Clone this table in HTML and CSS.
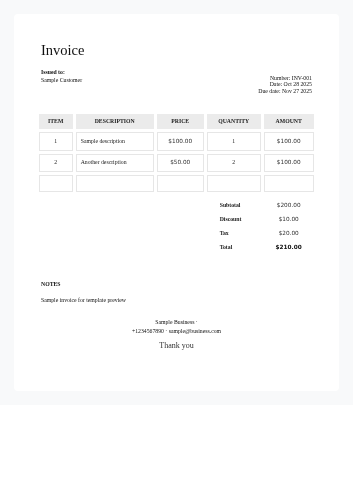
FILE: index.html
```html
<!DOCTYPE html>
<html lang="en">
<head>
<meta charset="utf-8">
<title>Invoice</title>
<link rel="stylesheet" href="styles.css">
</head>
<body>
<div class="page">
  <div class="card">
    <h1 class="title">Invoice</h1>
    <div class="meta">
      <div class="issued">
        <div class="strong">Issued to:</div>
        <div>Sample Customer</div>
      </div>
      <div class="info">
        <div>Number: INV-001</div>
        <div>Date: Oct 28 2025</div>
        <div>Due date: Nov 27 2025</div>
      </div>
    </div>
    <table class="items">
      <colgroup>
        <col class="c-item"><col class="c-desc"><col class="c-price"><col class="c-qty"><col class="c-amt">
      </colgroup>
      <thead>
        <tr><th>ITEM</th><th>DESCRIPTION</th><th>PRICE</th><th>QUANTITY</th><th>AMOUNT</th></tr>
      </thead>
      <tbody>
        <tr><td>1</td><td class="desc">Sample description</td><td class="money">$100.00</td><td>1</td><td class="money">$100.00</td></tr>
        <tr><td>2</td><td class="desc">Another description</td><td class="money">$50.00</td><td>2</td><td class="money">$100.00</td></tr>
        <tr class="empty"><td></td><td></td><td></td><td></td><td></td></tr>
      </tbody>
    </table>
    <div class="totals">
      <div class="t-label">Subtotal</div><div class="t-value">$200.00</div>
      <div class="t-label">Discount</div><div class="t-value">$10.00</div>
      <div class="t-label">Tax</div><div class="t-value">$20.00</div>
      <div class="t-label">Total</div><div class="t-value grand">$210.00</div>
    </div>
    <div class="notes">
      <div class="notes-title">NOTES</div>
      <div class="notes-text">Sample invoice for template preview</div>
    </div>
    <div class="footer">
      <div class="footer-line">Sample Business ·</div>
      <div class="footer-line">+1234567890 · sample@business.com</div>
      <div class="thanks">Thank you</div>
    </div>
  </div>
</div>
</body>
</html>
```
FILE: styles.css
```css
html, body {
  margin: 0;
  background: #ffffff;
}
body {
  font-family: "Liberation Serif", "Times New Roman", serif;
  color: #111;
}
.page {
  background: #f8f9fa;
  padding: 14px;
}
.card {
  background: #ffffff;
  border-radius: 4px;
  padding: 28px 27px 40px;
  will-change: transform;
}
.title {
  margin: 0;
  font-size: 14.5px;
  line-height: 17px;
  font-weight: normal;
  color: #111;
}
.meta {
  display: flex;
  justify-content: space-between;
  align-items: flex-start;
  margin-top: 8.5px;
  font-size: 5.75px;
}
.issued {
  line-height: 8px;
}
.strong {
  font-weight: bold;
}
.info {
  margin-top: 7px;
  line-height: 6.5px;
  text-align: right;
}
.items {
  border-collapse: separate;
  border-spacing: 3px;
  table-layout: fixed;
  width: 281px;
  margin: 17px 0 0 -5.3px;
  font-size: 5.75px;
}
.c-item { width: 34px; }
.c-desc { width: 78px; }
.c-price { width: 47px; }
.c-qty { width: 54px; }
.c-amt { width: 50px; }
.items th {
  background: #ebebeb;
  font-weight: bold;
  height: 15px;
  padding: 0;
  text-align: center;
  vertical-align: middle;
  line-height: 7px;
  color: #222;
}
.items td {
  border: 1px solid #e6e6e6;
  height: 16.5px;
  padding: 0;
  text-align: center;
  vertical-align: middle;
  line-height: 7px;
  color: #222;
}
.items tr.empty td {
  height: 14.5px;
}
.items td.desc {
  text-align: left;
  padding-left: 4px;
}
.items td.money {
  font-family: "DejaVu Sans", sans-serif;
  color: #333;
}
.totals {
  display: grid;
  grid-template-columns: 44px 50px;
  grid-auto-rows: 14px;
  width: 94px;
  margin: 3px -1.7px 0 auto;
  font-size: 5.75px;
  align-items: center;
}
.t-label {
  font-weight: bold;
  color: #222;
}
.t-value {
  font-family: "DejaVu Sans", sans-serif;
  text-align: center;
  color: #333;
}
.t-value.grand {
  font-weight: bold;
  color: #111;
}
.notes {
  margin-top: 27px;
  font-size: 5.75px;
  line-height: 7px;
}
.notes-title {
  font-weight: bold;
}
.notes-text {
  margin-top: 9.7px;
}
.footer {
  margin-top: 14px;
  text-align: center;
  font-size: 5.75px;
}
.footer-line {
  line-height: 9px;
}
.thanks {
  margin-top: 5px;
  font-size: 8px;
  line-height: 10px;
  color: #333;
}
```
